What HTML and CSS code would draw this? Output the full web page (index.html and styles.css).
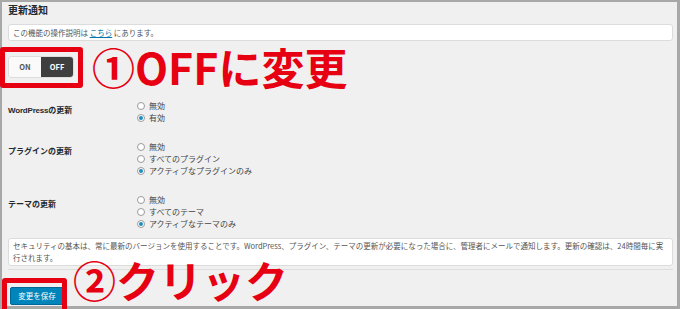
FILE: index.html
```html
<!DOCTYPE html>
<html lang="ja">
<head>
<meta charset="utf-8">
<title>更新通知</title>
<link rel="stylesheet" href="styles.css">
</head>
<body>
<div class="frame">
  <h2 class="title">更新通知</h2>
  <div class="notice">この機能の操作説明は <a href="#" class="link">こちら</a> にあります。</div>

  <div class="toggle">
    <span class="tg-on">ON</span>
    <span class="tg-off">OFF</span>
  </div>

  <div class="settings">
    <div class="label"><span class="latin">WordPress</span>の更新</div>
    <div class="options">
      <div class="opt"><span class="radio"></span>無効</div>
      <div class="opt"><span class="radio checked"></span>有効</div>
    </div>

    <div class="label">プラグインの更新</div>
    <div class="options">
      <div class="opt"><span class="radio"></span>無効</div>
      <div class="opt"><span class="radio"></span>すべてのプラグイン</div>
      <div class="opt"><span class="radio checked"></span>アクティブなプラグインのみ</div>
    </div>

    <div class="label">テーマの更新</div>
    <div class="options">
      <div class="opt"><span class="radio"></span>無効</div>
      <div class="opt"><span class="radio"></span>すべてのテーマ</div>
      <div class="opt"><span class="radio checked"></span>アクティブなテーマのみ</div>
    </div>
  </div>

  <div class="desc">セキュリティの基本は、常に最新のバージョンを使用することです。WordPress、プラグイン、テーマの更新が必要になった場合に、管理者にメールで通知します。更新の確認は、24時間毎に実行されます。</div>

  <div class="sep"></div>

  <div class="submit-row">
    <button class="save" type="button">変更を保存</button>
  </div>

  <div class="callout-box box-one"></div>
  <div class="callout-text text-one">①OFFに変更</div>
  <div class="callout-box box-two"></div>
  <div class="callout-text text-two">②クリック</div>
</div>
</body>
</html>
```

FILE: styles.css
```css
html, body {
  margin: 0;
  padding: 0;
  overflow: hidden;
  background: #f0f0f0;
}

.frame {
  position: relative;
  width: 680px;
  height: 309px;
  box-sizing: border-box;
  border-style: solid;
  border-color: #a8a8a8;
  border-width: 2px 3px 3px 2px;
  background: #f0f0f0;
  padding: 0 4px 0 6px;
  display: flex;
  flex-direction: column;
  font-family: "Noto Sans CJK JP", "Noto Sans", sans-serif;
  color: #444;
}

.title {
  margin: 1px 0 0;
  font-size: 10px;
  line-height: 14px;
  font-weight: bold;
  color: #23282d;
}

.notice {
  margin-top: 7px;
  height: 17px;
  box-sizing: border-box;
  background: #fff;
  border: 1px solid #dcdcdc;
  border-radius: 3px;
  padding: 0 4px;
  font-size: 7.5px;
  line-height: 15px;
  color: #555;
}

.link {
  color: #0073aa;
  text-decoration: underline;
}

.toggle {
  margin: 16px 0 0 1px;
  width: 64px;
  height: 20px;
  display: flex;
  border-radius: 3px;
  overflow: hidden;
  box-shadow: 0 0 0 1px #ddd;
  font-size: 7.5px;
  font-weight: bold;
  line-height: 20px;
}

.tg-on {
  flex: 1;
  background: #fafafa;
  color: #555;
  text-align: center;
}

.tg-off {
  flex: 1;
  background: #3f3f3f;
  color: #fff;
  text-align: center;
}

.settings {
  margin-top: 23px;
  display: grid;
  grid-template-columns: 129px 1fr;
  row-gap: 17px;
}

.label {
  padding-top: 4px;
  font-size: 8px;
  line-height: 12px;
  font-weight: bold;
  color: #23282d;
}

.latin {
  font-family: "Liberation Sans", sans-serif;
  letter-spacing: -0.2px;
}

.options {
  display: flex;
  flex-direction: column;
}

.opt {
  display: flex;
  align-items: center;
  height: 12px;
  font-size: 8px;
  line-height: 12px;
  color: #444;
}

.radio {
  width: 8px;
  height: 8px;
  box-sizing: border-box;
  border: 1px solid #9a9a9a;
  border-radius: 50%;
  background: #fff;
  margin-right: 4px;
  display: inline-flex;
  align-items: center;
  justify-content: center;
}

.radio.checked::after {
  content: "";
  width: 4px;
  height: 4px;
  border-radius: 50%;
  background: #1e8cbe;
}

.desc {
  margin-top: 8px;
  background: #fff;
  border: 1px solid #dcdcdc;
  border-radius: 3px;
  padding: 1px 4px;
  font-size: 7.5px;
  line-height: 12px;
  color: #555;
}

.sep {
  margin-top: 3px;
  height: 1px;
  background: #dedede;
}

.submit-row {
  margin-top: 17px;
  display: flex;
}

.save {
  margin: 0 0 0 2px;
  width: 54px;
  height: 18px;
  padding: 0;
  border: 1px solid #006799;
  border-radius: 2px;
  background: #0085ba;
  color: #fff;
  font-family: "Noto Sans CJK JP", "Noto Sans", sans-serif;
  font-size: 7.5px;
  line-height: 16px;
}

.callout-box {
  position: absolute;
  box-sizing: border-box;
  border: 5px solid #e60012;
  border-radius: 3px;
}

.box-one {
  left: -2px;
  top: 45px;
  width: 83px;
  height: 41px;
}

.box-two {
  left: 0;
  top: 276px;
  width: 65px;
  height: 40px;
}

.callout-text {
  position: absolute;
  font-family: "Noto Sans CJK JP", sans-serif;
  font-weight: bold;
  font-size: 43px;
  line-height: 43px;
  color: #e60012;
  white-space: nowrap;
}

.text-one {
  left: 90px;
  top: 43px;
}

.text-two {
  left: 71px;
  top: 256px;
}
```
